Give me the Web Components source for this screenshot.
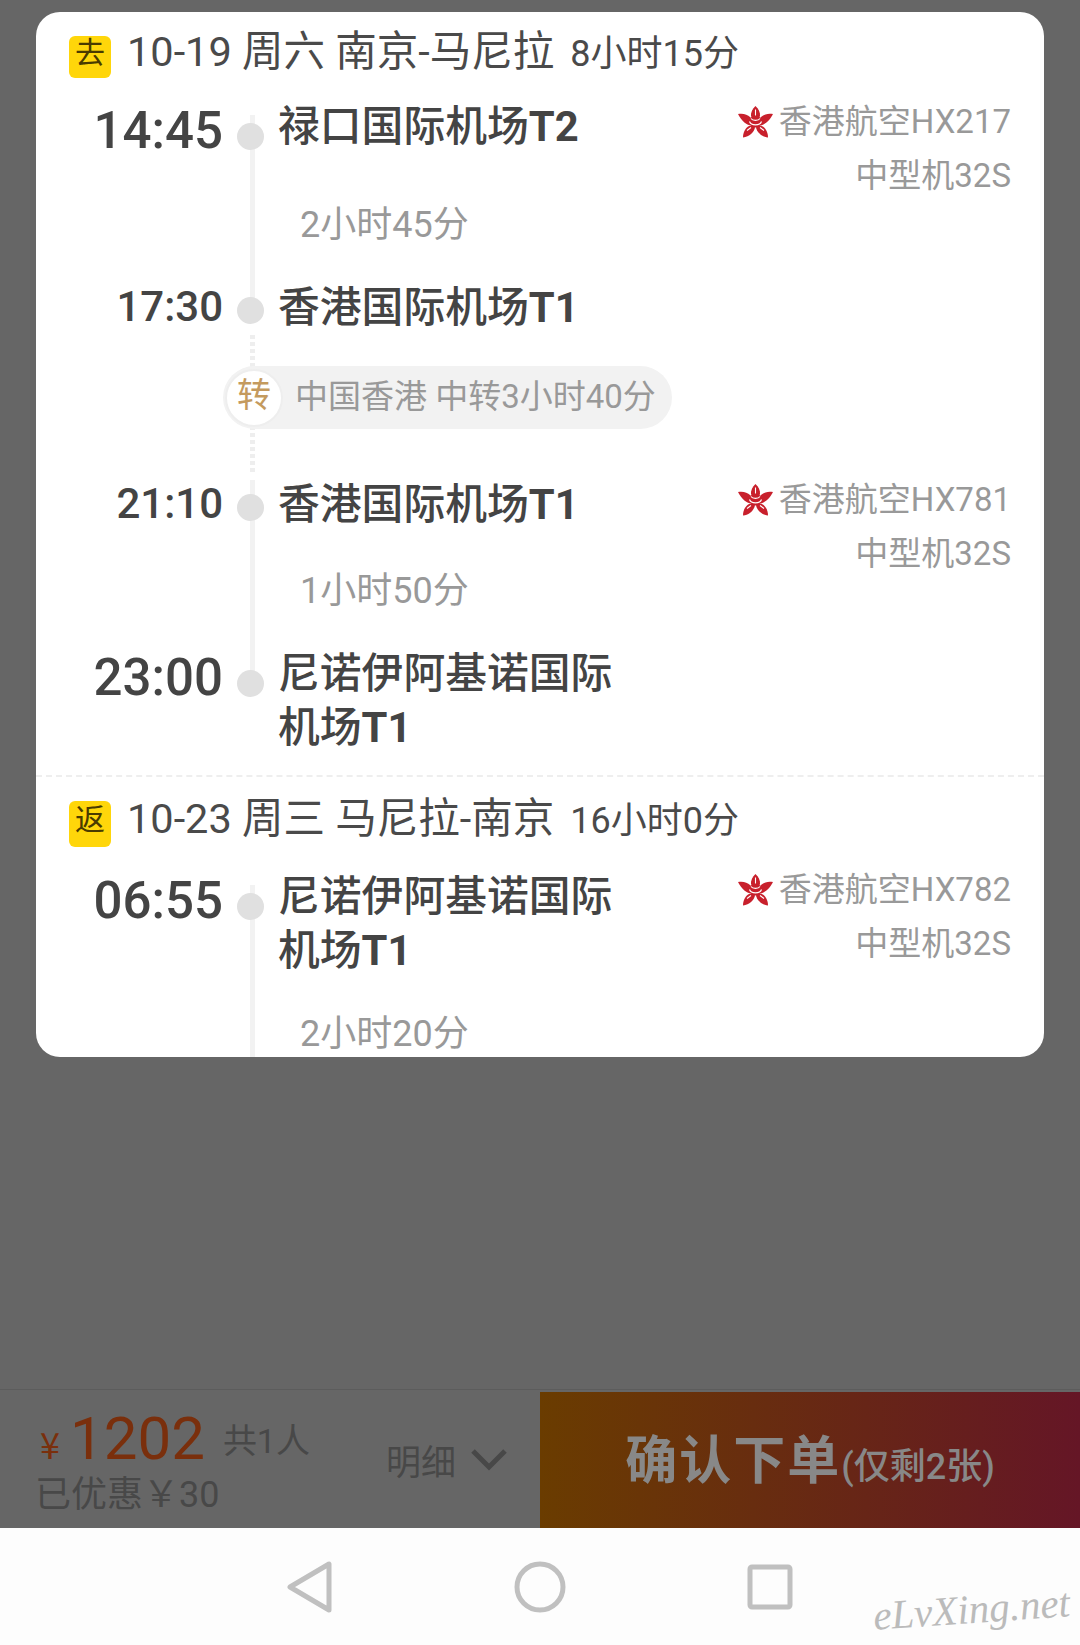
<!DOCTYPE html>
<html>
<head>
<meta charset="utf-8">
<style>
  html, body { margin: 0; padding: 0; }
  body {
    width: 1080px;
    height: 1645px;
    overflow: hidden;
    display: flex;
    flex-direction: column;
    background: #666;
    font-family: Roboto, "Noto Sans CJK SC", sans-serif;
  }
  .spacer { flex: 1; }
</style>
</head>
<body>
  <trip-card>
    <leg-head tag="去" date="10-19 周六 南京-马尼拉" dur="8小时15分"></leg-head>
    <flight-seg style="--tail:25px">
      <stop-row time="14:45" big>
        禄口国际机场<b>T2</b>
        <airline-info slot="info" flight="香港航空HX217" plane="中型机32S"></airline-info>
      </stop-row>
      <seg-dur>2小时45分</seg-dur>
      <stop-row time="17:30">香港国际机场<b>T1</b></stop-row>
    </flight-seg>
    <transfer-pill>中国香港 中转3小时40分</transfer-pill>
    <flight-seg style="--lead:6px;--tail:68px">
      <stop-row time="21:10">
        香港国际机场<b>T1</b>
        <airline-info slot="info" flight="香港航空HX781" plane="中型机32S"></airline-info>
      </stop-row>
      <seg-dur style="margin-top:-17px">1小时50分</seg-dur>
      <stop-row time="23:00" big>尼诺伊阿基诺国际<br>机场<b>T1</b></stop-row>
    </flight-seg>
    <leg-head tag="返" date="10-23 周三 马尼拉-南京" dur="16小时0分" divided></leg-head>
    <flight-seg style="--tail:0px">
      <stop-row time="06:55" big>
        尼诺伊阿基诺国际<br>机场<b>T1</b>
        <airline-info slot="info" style="margin-top:-3px" flight="香港航空HX782" plane="中型机32S"></airline-info>
      </stop-row>
      <seg-dur style="margin-top:29px">2小时20分</seg-dur>
    </flight-seg>
  </trip-card>
  <div class="spacer"></div>
  <price-bar></price-bar>
  <nav-bar></nav-bar>

<script>
// small helper so every element below sets its shadow root the same way
function shadow(el, html) {
  el.attachShadow({ mode: 'open' });
  el.shadowRoot.innerHTML = html;
}

class TripCard extends HTMLElement {
  constructor() {
    super();
    shadow(this, `
      <style>
        :host {
          display: block;
          height: 1045px;
          margin: 12px 36px 0;
          background: #fff;
          border-radius: 24px;
          overflow: hidden;
          box-sizing: border-box;
        }
      </style>
      <slot></slot>
    `);
  }
}

class LegHead extends HTMLElement {
  constructor() {
    super();
    shadow(this, `
      <style>
        :host {
          display: flex;
          align-items: center;
          height: 42px;
          padding: 24px 0 0 33px;
          margin-bottom: 18px;
          color: #4a4a4a;
          font-size: 41.5px;
          white-space: nowrap;
        }
        :host([divided]) {
          margin-top: 20px;
          padding-top: 24px;
          border-top: 2px dashed #eee;
          height: 46px;
          margin-bottom: 19px;
        }
        .tag {
          width: 42px;
          height: 100%;
          margin-right: 16px;
          border-radius: 6px;
          background: #ffd60a;
          color: #4a3b00;
          font-size: 30px;
          line-height: 1;
          display: flex;
          align-items: center;
          justify-content: center;
          padding-bottom: 9px;
          box-sizing: border-box;
          flex: none;
        }
        .text { display: flex; align-items: baseline; line-height: 42px; margin-top: -8px; }
        .dur { font-size: 36px; margin-left: 16px; }
      </style>
      <span class="tag">${this.getAttribute('tag')}</span>
      <span class="text">
        <span>${this.getAttribute('date')}</span>
        <span class="dur">${this.getAttribute('dur')}</span>
      </span>
    `);
  }
}

class FlightSeg extends HTMLElement {
  constructor() {
    super();
    shadow(this, `
      <style>
        :host {
          display: block;
          background: linear-gradient(#f2f2f2, #f2f2f2) no-repeat 214px var(--lead, 19px) / 5px calc(100% - var(--lead, 19px) - var(--tail, 0px));
        }
      </style>
      <slot></slot>
    `);
  }
}

class StopRow extends HTMLElement {
  constructor() {
    super();
    shadow(this, `
      <style>
        :host {
          display: grid;
          grid-template-columns: 187px 55px 1fr auto;
          padding-right: 33px;
          color: #444;
        }
        .time {
          font-size: 42px;
          font-weight: 500;
          text-align: right;
          line-height: 54px;
          padding-top: 3px;
        }
        :host([big]) .time { font-size: 51px; padding-top: 8px; }
        .dot { display: flex; justify-content: center; padding-top: 20px; }
        :host([big]) .dot { padding-top: 27px; }
        .dot i {
          display: block;
          width: 27px;
          height: 27px;
          border-radius: 50%;
          background: #e0e0e0;
        }
        .name {
          font-size: 41.8px;
          font-weight: 500;
          line-height: 54px;
          font-family: "Noto Sans CJK SC", sans-serif;
        }
        ::slotted(b) { font-family: Roboto, sans-serif; font-weight: 700; }
      </style>
      <div class="time">${this.getAttribute('time')}</div>
      <div class="dot"><i></i></div>
      <div class="name"><slot></slot></div>
      <slot name="info"></slot>
    `);
  }
}

class SegDur extends HTMLElement {
  constructor() {
    super();
    shadow(this, `
      <style>
        :host {
          display: block;
          margin-top: -5px;
          padding: 0 0 25px 264px;
          color: #999;
          font-size: 36px;
          line-height: 54px;
        }
      </style>
      <slot></slot>
    `);
  }
}

class HkLogo extends HTMLElement {
  constructor() {
    super();
    shadow(this, `
      <style>
        :host { display: block; width: 35px; height: 32px; }
        svg { display: block; }
      </style>
      <svg width="35" height="32" viewBox="0 0 35 32">
        <path fill="#c8202c" d="M17.5 0C20.500 3 22.500 6.500 22 10L20 14H15L13 10C12.500 6.500 14.500 3 17.500 0Z"/>
        <path fill="#c8202c" d="M0 8C5 7 9.500 8.500 12 11L15 15L13.500 19.500C9 19.500 3.500 15 0 8Z"/>
        <path fill="#c8202c" d="M35 8C30 7 25.500 8.500 23 11L20 15L21.500 19.500C26 19.500 31.500 15 35 8Z"/>
        <path fill="#c8202c" d="M5 31.500C5 26 7.500 22 11 20L15 19L17 21.500C16 26 11.500 31 5 31.500Z"/>
        <path fill="#c8202c" d="M30 31.500C30 26 27.500 22 24 20L20 19L18 21.500C19 26 23.500 31 30 31.500Z"/>
        <circle cx="17.500" cy="15.500" r="6" fill="#c8202c"/>
        <path fill="none" stroke="#fff" stroke-width="1.100" d="M13 12.500C14.500 15 20.500 15 22 12.500M11.500 15.500C13 20 22 20 23.500 15.500M17.500 3.500V9.500M9 24.500L13 21.500M26 24.500L22 21.500"/>
      </svg>
    `);
  }
}

class AirlineInfo extends HTMLElement {
  constructor() {
    super();
    shadow(this, `
      <style>
        :host {
          display: block;
          margin-top: -1px;
          color: #999;
          font-size: 33px;
          line-height: 54px;
          text-align: right;
          white-space: nowrap;
        }
        .top { display: flex; align-items: center; justify-content: flex-end; gap: 6px; }
      </style>
      <div class="top"><hk-logo></hk-logo><span>${this.getAttribute('flight')}</span></div>
      <div>${this.getAttribute('plane')}</div>
    `);
  }
}

class TransferPill extends HTMLElement {
  constructor() {
    super();
    shadow(this, `
      <style>
        :host {
          display: block;
          height: 139px;
          padding: 31px 0 0 187px;
          box-sizing: border-box;
          background: repeating-linear-gradient(#eee 0 4px, #fff 4px 7px) no-repeat 214px 0 / 5px 100%;
        }
        .pill {
          display: flex;
          align-items: center;
          width: 449px;
          height: 63px;
          border-radius: 32px;
          background: #f2f2f2;
          color: #999;
          font-size: 33px;
        }
        .label { padding-bottom: 8px; }
        .mark {
          width: 54px;
          height: 54px;
          margin-left: 2px;
          margin-right: 12px;
          padding-bottom: 6px;
          box-sizing: content-box;
          border-radius: 50%;
          background: #fff;
          border: 2px solid #eee;
          color: #c49a5e;
          font-size: 34px;
          line-height: 1;
          display: flex;
          align-items: center;
          justify-content: center;
          height: 48px;
        }
      </style>
      <div class="pill"><span class="mark">转</span><span class="label"><slot></slot></span></div>
    `);
  }
}

class PriceBar extends HTMLElement {
  constructor() {
    super();
    shadow(this, `
      <style>
        :host {
          display: grid;
          grid-template-columns: 540px 540px;
          height: 139px;
          border-top: 1px solid #5c5c5c;
          box-sizing: border-box;
        }
        .left {
          display: flex;
          align-items: center;
          justify-content: space-between;
          padding: 0 32px 0 35px;
        }
        .price { display: flex; align-items: baseline; color: #7a2f0c; font-size: 60px; line-height: 62px; margin-top: 4px; }
        .yen { font-family: "Noto Sans CJK SC", sans-serif; font-size: 36px; margin-right: 10px; margin-left: 5px; }
        .people { font-size: 34px; color: #484848; margin-left: 18px; position: relative; top: -6px; }
        .saved { font-size: 36px; line-height: 40px; color: #484848; margin-top: -3px; }
        .detail { display: flex; align-items: center; gap: 14px; font-size: 35px; color: #484848; }
        .btn {
          display: flex;
          align-items: center;
          justify-content: center;
          margin-top: 2px;
          background: linear-gradient(90deg, #6a3c00, #651626);
          color: #888;
          font-weight: 700;
          font-size: 52px;
          white-space: nowrap;
          letter-spacing: 2px;
          padding-bottom: 8px;
          box-sizing: border-box;
        }
        .btn small { font-size: 36px; letter-spacing: 0; font-weight: 500; }
      </style>
      <div class="left">
        <div>
          <div class="price"><span class="yen">¥</span>1202<span class="people">共1人</span></div>
          <div class="saved">已优惠￥30</div>
        </div>
        <div class="detail">明细
          <svg width="38" height="24" viewBox="0 0 38 24"><path d="M3 4L19 20L35 4" fill="none" stroke="#484848" stroke-width="5"/></svg>
        </div>
      </div>
      <div class="btn"><span>确认下单<small>(仅剩2张)</small></span></div>
    `);
  }
}

class NavBar extends HTMLElement {
  constructor() {
    super();
    shadow(this, `
      <style>
        :host {
          display: flex;
          justify-content: center;
          gap: 181px;
          height: 117px;
          padding-top: 33px;
          box-sizing: border-box;
          background: #fdfdfd;
          position: relative;
        }
        svg { display: block; }
        .square { margin-top: 3px; }
        .mark {
          position: absolute;
          right: 10px;
          bottom: 12px;
          color: #bbb;
          font: italic 41px "Liberation Serif", serif;
          transform: rotate(-4deg);
        }
      </style>
      <svg width="46" height="52" viewBox="0 0 46 52"><path d="M42 3V49L3 26Z" fill="none" stroke="#c0c0c0" stroke-width="5" stroke-linejoin="round"/></svg>
      <svg width="52" height="52" viewBox="0 0 52 52"><circle cx="26" cy="26" r="23" fill="none" stroke="#c0c0c0" stroke-width="5"/></svg>
      <svg class="square" width="46" height="46" viewBox="0 0 46 46"><rect x="3" y="3" width="40" height="40" rx="2" fill="none" stroke="#c0c0c0" stroke-width="5"/></svg>
      <span class="mark">eLvXing.net</span>
    `);
  }
}

customElements.define('trip-card', TripCard);
customElements.define('leg-head', LegHead);
customElements.define('flight-seg', FlightSeg);
customElements.define('stop-row', StopRow);
customElements.define('seg-dur', SegDur);
customElements.define('hk-logo', HkLogo);
customElements.define('airline-info', AirlineInfo);
customElements.define('transfer-pill', TransferPill);
customElements.define('price-bar', PriceBar);
customElements.define('nav-bar', NavBar);
</script>
</body>
</html>
